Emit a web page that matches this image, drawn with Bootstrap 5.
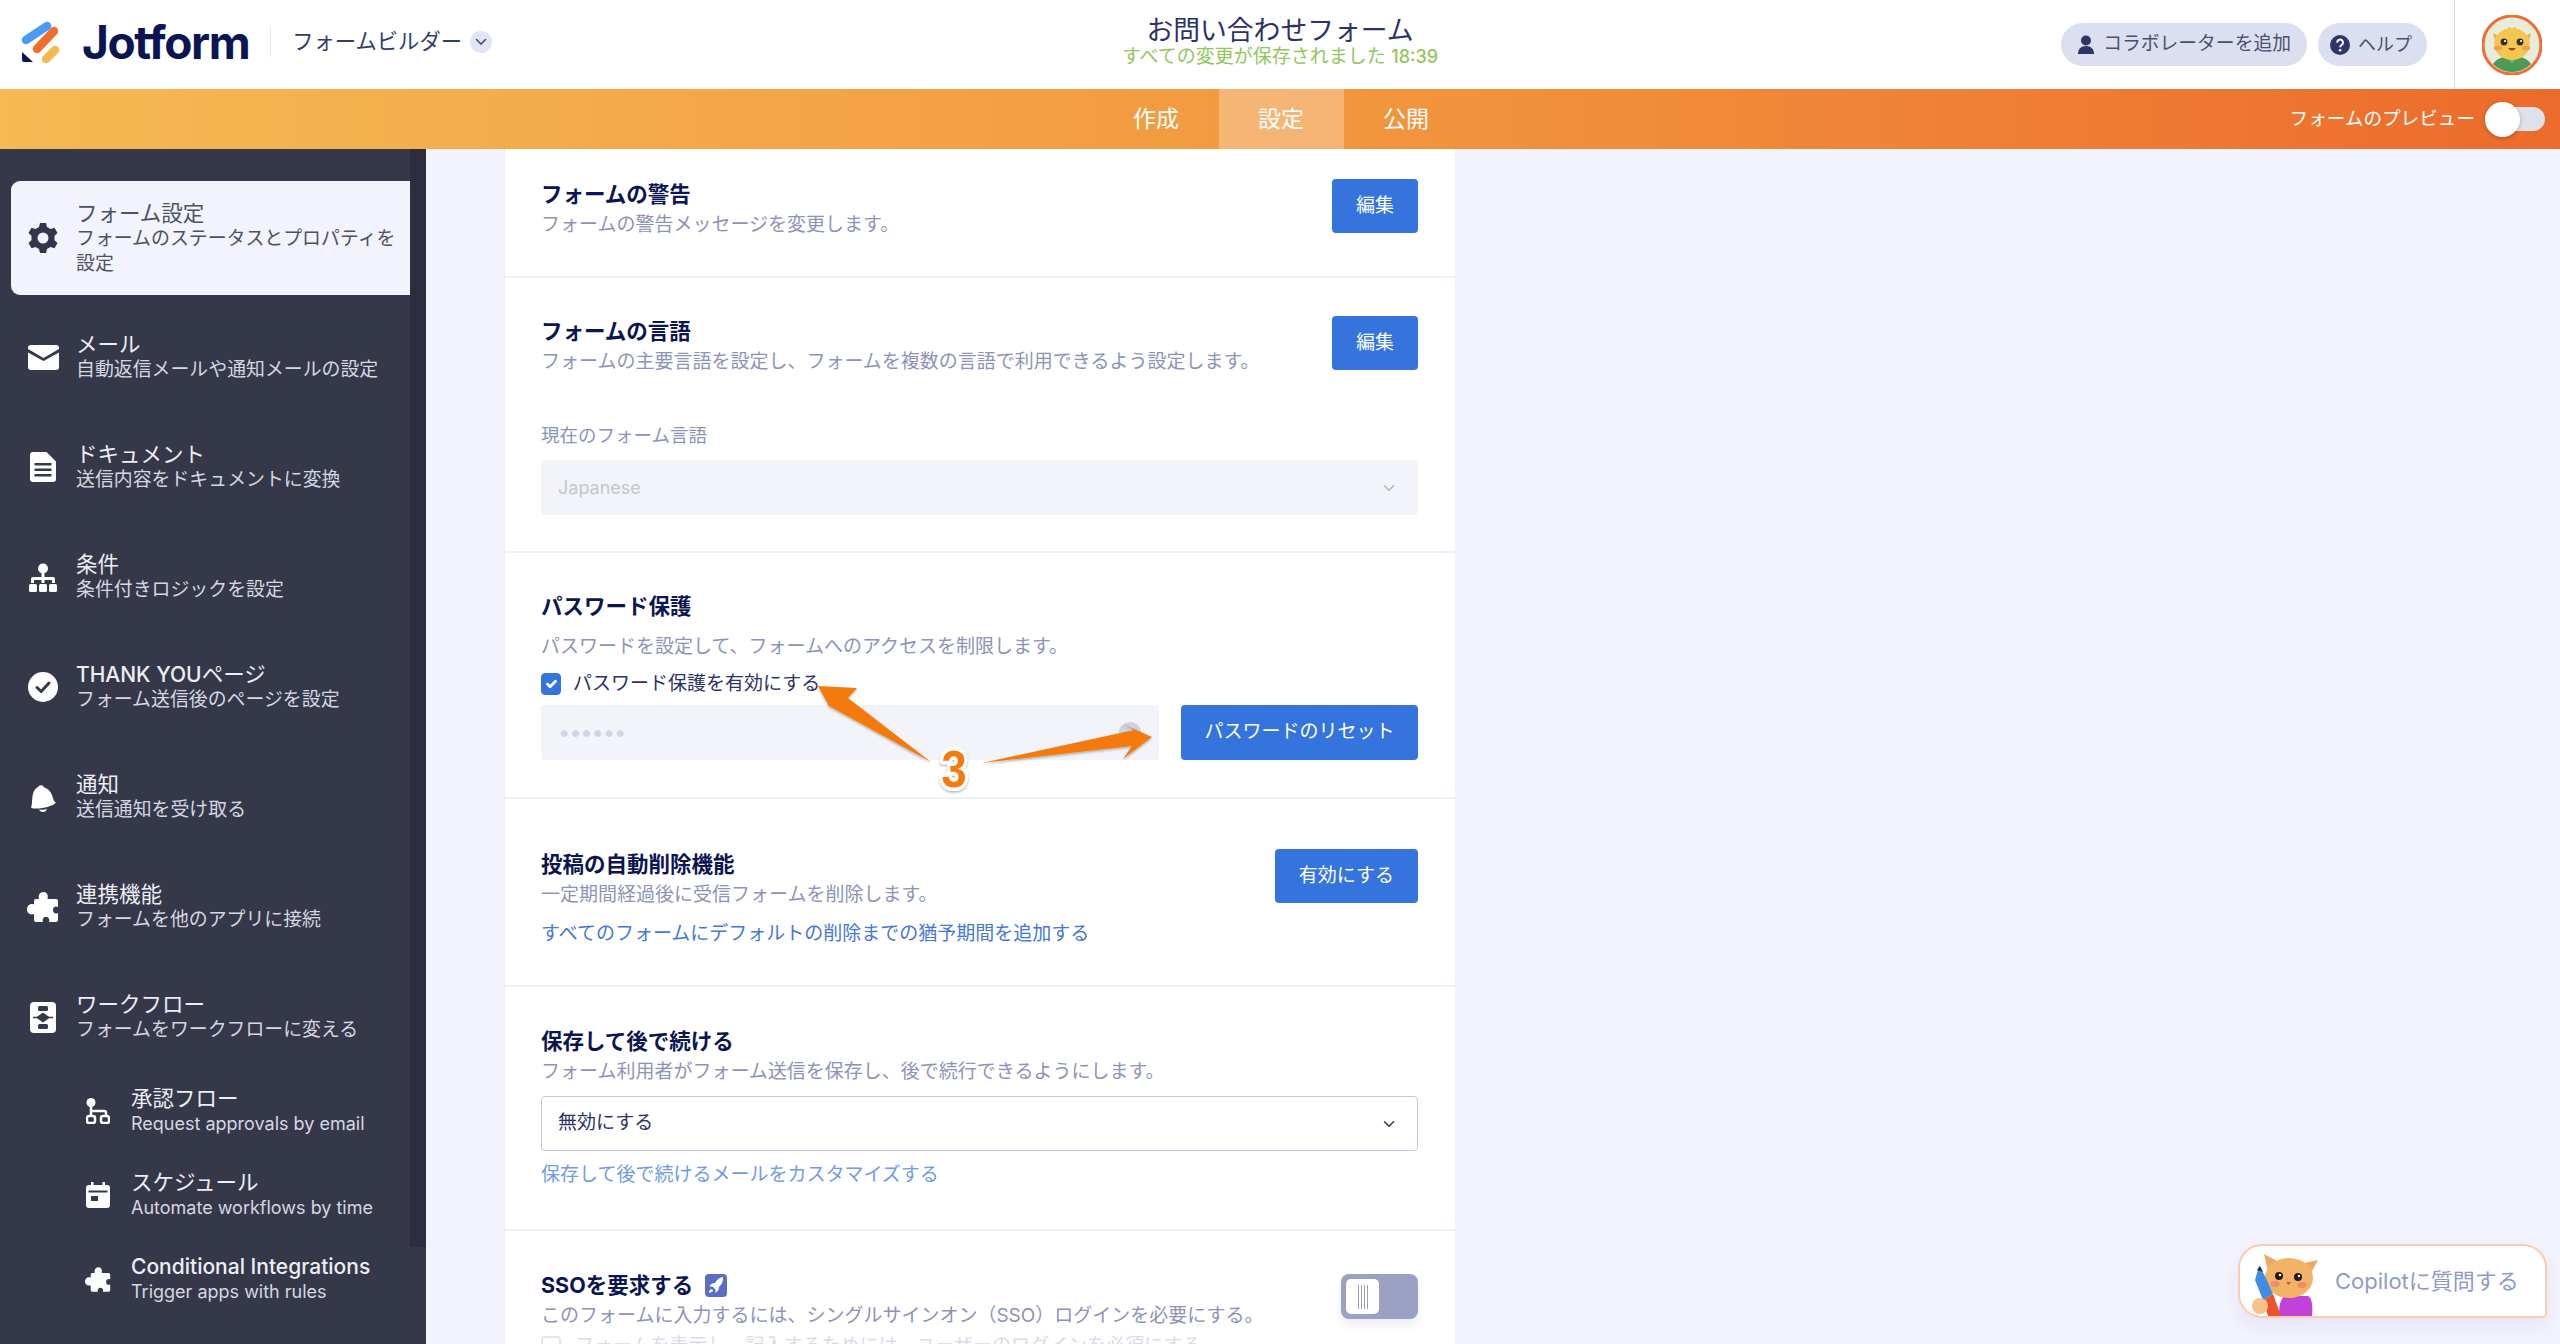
<!DOCTYPE html>
<html lang="ja">
<head>
  <meta charset="UTF-8" />
  <meta name="viewport" content="width=device-width, initial-scale=1.0"/>
  <title>お問い合わせフォーム</title>
  <link href="https://cdn.jsdelivr.net/npm/bootstrap@5.3.0/dist/css/bootstrap.min.css" rel="stylesheet" />
  <style>
    html, body { height: 100%; }
    body {
      background-color: #f3f3fe;
      font-family: "Inter", "Noto Sans CJK JP", sans-serif;
      color: #0a1551;
      overflow: hidden;
      position: relative;
    }

    /* cabecera */
    .top-head { height: 89px; display: grid; grid-template-columns: 1fr auto 1fr; background: #fff; }
    .head-left { padding-left: 19px; padding-bottom: 5px; }
    .jf-word { font-family: "Inter", sans-serif; font-weight: 700; font-size: 46px; letter-spacing: -1.4px; color: #0a1551; line-height: 1; margin-left: 19px; }
    .head-sep { width: 1px; height: 30px; background: #e6e7f2; margin: 0 21px; }
    .builder { font-size: 21.3px; color: #343c6a; }
    .chev-dot { width: 22px; height: 22px; border-radius: 50%; background: #e3e5f5; margin-left: 8px; }
    .form-name { font-size: 26.8px; line-height: 32px; color: #2a3266; margin-top: 14px; }
    .save-state { font-size: 19px; line-height: 22px; color: #93c65d; white-space: nowrap; }
    .save-state b { font-weight: 500; font-size: 18px; }
    .pill-jf { height: 43px; border-radius: 22px; background: #dcdff0; color: #4b5071; font-size: 18.8px; padding: 0 16px; white-space: nowrap; }
    .pill-help { margin-left: 11px; margin-right: 27px; padding: 0 15px 0 12px; font-size: 18px; }
    .head-rule { width: 1px; height: 89px; background: #d9dbe9; }
    .face { margin: 0 18px 0 27px; }

    /* barra naranja */
    .tab-strip { height: 60px; padding-left: 2px; display: grid; grid-template-columns: 1fr auto 1fr; background: linear-gradient(90deg, #f6b954 0%, #f2993f 50%, #ec6b2c 100%); }
    .tab-jf { width: 125px; height: 60px; line-height: 60px; text-align: center; color: #fff; font-size: 23px; }
    .tab-on { background: rgba(255, 255, 255, .28); }
    .prev-label { color: #fff; font-size: 18.6px; margin-right: 10px; white-space: nowrap; }
    .prev-track { width: 60px; height: 24px; border-radius: 12px; background: #dfe1ea; margin-right: 15px; }
    .prev-knob { width: 35px; height: 35px; border-radius: 50%; background: #fff; box-shadow: 0 1px 4px rgba(0, 0, 0, .25); }

    /* lateral */
    .work-area { height: 1195px; }
    .side-col { width: 426px; flex: none; background: #353849; display: flex; overflow: hidden; }
    .side-nav { width: 410px; padding: 32px 0 0 11px; flex: none; }
    .side-track { width: 16px; }
    .side-thumb { height: 1098px; background: #2c2e3d; }
    .side-item { display: flex; align-items: center; height: 110px; color: #eceef5; }
    .side-item.is-active { height: 114px; margin-bottom: 7px; background: #f3f3fe; color: #4d5163; border-radius: 9px 0 0 9px; }
    .side-item.is-sub { height: 84px; padding-left: 67px; }
    .sub-block { margin-top: -3px; }
    .side-ico { width: 44px; margin-left: 10px; margin-right: 11px; flex: none; display: flex; justify-content: center; }
    .side-item.is-sub .side-ico { width: 36px; margin-left: 2px; margin-right: 15px; }
    .side-main { font-size: 21.5px; line-height: 25px; display: block; }
    .side-sub { font-size: 18.9px; line-height: 25px; display: block; color: #d5d7e1; white-space: nowrap; }
    .is-active .side-sub { color: #4d5163; }
    .side-en { font-size: 18px; }
    .side-main-en { font-size: 21px; font-weight: 500; }

    /* tarjeta */
    .setting-card { width: 951px; margin-left: 78px; background: #fff; border-left: 1px solid #eeeefb; overflow: hidden; }
    .set-row { padding-left: 36px; padding-right: 37px; border-bottom: 2px solid #f0f0fb; }
    .set-warn { height: 129px; padding-top: 30px; }
    .set-lang { height: 275px; padding-top: 38px; }
    .set-pass { height: 246px; padding-top: 38px; }
    .set-auto { height: 188px; padding-top: 50px; }
    .set-save { height: 244px; padding-top: 39px; }
    .set-sso { padding-top: 39px; border-bottom: 0; }
    .set-title { font-size: 21.5px; font-weight: 700; line-height: 31px; color: #0a1551; }
    .set-desc { font-size: 19px; line-height: 30px; color: #8d93b8; white-space: nowrap; }
    .desc-gap { margin-top: 10px; }
    .btn-jf { background: #3474dc; border: 0; color: #fff; font-size: 19px; height: 54px; padding: 0 24px; border-radius: 4px; white-space: nowrap; }
    .btn-jf:hover { background: #2b66c6; color: #fff; }
    .field-label { font-size: 18.5px; line-height: 26px; color: #8d93b8; margin-top: 45px; margin-bottom: 12px; }
    .sel-jf { height: 55px; border-radius: 4px; font-size: 19px; padding-left: 16px; background-position: right 20px center; }
    .sel-off, .sel-off:disabled {
      background-color: #f3f4f9; border-color: #f3f4f9; color: #c3c6d6; opacity: 1; font-size: 18px;
      background-image: url("data:image/svg+xml,%3csvg xmlns='http://www.w3.org/2000/svg' viewBox='0 0 16 16'%3e%3cpath fill='none' stroke='%23b4b7c9' stroke-linecap='round' stroke-linejoin='round' stroke-width='2' d='m2 5 6 6 6-6'/%3e%3c/svg%3e");
    }
    .sel-live { border: 1px solid #c3c7de; color: #2a3266; margin-top: 9px; }
    .pass-check { height: 26px; margin-top: 9px; margin-bottom: 8px; font-size: 19px; color: #2a3266; }
    .pass-check .form-check-input { width: 20px; height: 22px; margin: 0 12px 0 0; border-radius: 4px; background-color: #3474dc; border-color: #3474dc; }
    .pass-field { width: 618px; height: 55px; background: #f3f4f9; border-radius: 4px; padding-left: 17px; color: #d3d4e3; font-size: 22px; letter-spacing: -1.2px; }
    .eye-dot { position: absolute; width: 22px; height: 20px; right: 18px; top: 17px; background: #cfd1e2; border-radius: 50%; }
    .btn-reset { width: 237px; height: 55px; padding: 0; }
    .link-jf { color: #4277d9; font-size: 19px; line-height: 30px; text-decoration: none; display: block; white-space: nowrap; margin-top: 9px; }
    .link-soft { color: #6f9be4; }
    .rocket-tag { width: 22px; height: 23px; background: #5a6fc4; border-radius: 4px; margin-left: 12px; }
    .sso-switch { width: 77px; height: 45px; margin-top: 4px; background: #9ba0c4; border-radius: 8px; padding: 5px; box-shadow: 0 6px 10px rgba(10, 21, 81, .08); }
    .sso-knob { width: 33px; height: 35px; background: #fff; border-radius: 5px; gap: 2px; }
    .sso-knob i { width: 1px; height: 24px; background: #9ba0c4; }
    .ghost-row { color: #d9dbe9; font-size: 19px; line-height: 26px; margin-top: 2px; white-space: nowrap; }
    .ghost-box { width: 20px; height: 20px; border: 2px solid #e4e5f0; border-radius: 4px; margin-right: 14px; }

    /* encima */
    .copilot-btn {
      position: absolute; left: 2238px; top: 1244px; width: 309px; height: 74px;
      background: #fff; border: 2px solid #f8cdb0; border-radius: 24px 24px 5px 24px;
      box-shadow: 0 8px 18px rgba(60, 60, 140, .08);
      color: #8f9bc4; font-size: 22px; white-space: nowrap;
    }
    .copilot-btn span { margin-left: 95px; }
    .copilot-cat { position: absolute; left: 11px; top: 8px; }
    .mark-layer { position: absolute; left: 0; top: 0; pointer-events: none; }
    .mark-num { font-family: "Liberation Sans", sans-serif; font-weight: 700; font-size: 52px; fill: #f57a10; stroke: #fff; stroke-width: 7px; paint-order: stroke; stroke-linejoin: round; }
  </style>
</head>
<body>

<header class="top-head">
  <div class="head-left d-flex align-items-center">
    <svg width="44" height="46" viewBox="21 15 40 46">
      <path d="M26 36 47 22" stroke="#4a9bf5" stroke-width="8.5" stroke-linecap="round"/>
      <path d="M37 45 54 27" stroke="#ee6f2e" stroke-width="8.500" stroke-linecap="round"/>
      <path d="M46 55 55 46" stroke="#f5bb52" stroke-width="8.500" stroke-linecap="round"/>
      <path d="M22 48 33 58H24a2 2 0 0 1-2-2Z" fill="#0a1551"/>
    </svg>
    <span class="jf-word">Jotform</span>
    <span class="head-sep"></span>
    <span class="builder">フォームビルダー</span>
    <span class="chev-dot d-flex align-items-center justify-content-center">
      <svg width="12" height="8" viewBox="0 0 12 8"><path d="M1.5 1.5 6 6l4.5-4.5" fill="none" stroke="#4b5071" stroke-width="1.6" stroke-linecap="round"/></svg>
    </span>
  </div>
  <div class="text-center">
    <div class="form-name">お問い合わせフォーム</div>
    <div class="save-state">すべての変更が保存されました <b>18:39</b></div>
  </div>
  <div class="d-flex align-items-center justify-content-end">
    <div class="pill-jf d-flex align-items-center gap-2">
      <svg width="18" height="20" viewBox="0 0 18 20"><circle cx="9" cy="5.5" r="5" fill="#2f3566"/><path d="M1 19c0-5 3-8 8-8s8 3 8 8Z" fill="#2f3566"/></svg>
      コラボレーターを追加
    </div>
    <div class="pill-jf pill-help d-flex align-items-center gap-2">
      <svg width="20" height="20" viewBox="0 0 20 20"><circle cx="10" cy="10" r="10" fill="#2f3566"/><path d="M7.2 7.6a2.9 2.9 0 1 1 4.4 2.4c-1 .7-1.5 1.1-1.5 2.2" fill="none" stroke="#fff" stroke-width="2"/><circle cx="10.1" cy="15.2" r="1.3" fill="#fff"/></svg>
      ヘルプ
    </div>
    <div class="head-rule"></div>
    <svg class="face" width="60" height="60" viewBox="0 0 60 60">
      <defs><clipPath id="faceClip"><circle cx="30" cy="30" r="27"/></clipPath></defs>
      <circle cx="30" cy="30" r="29" fill="#e8ebdd" stroke="#ee6f2e" stroke-width="3"/>
      <g clip-path="url(#faceClip)">
        <path d="M8 60c0-14 10-19 22-19s22 5 22 19Z" fill="#4c9a58"/>
        <path d="M25 42l5 6 5-6Z" fill="#7cc080"/>
        <path d="M11 18l8 5-5 7ZM49 18l-8 5 5 7ZM27 11l3 5 3-5 1 6h-8Z" fill="#eeb24a"/>
        <ellipse cx="30" cy="29" rx="18" ry="16" fill="#f4c64f"/>
        <circle cx="22" cy="27" r="3.4" fill="#33303a"/><circle cx="38" cy="27" r="3.4" fill="#33303a"/>
        <circle cx="23" cy="26" r="1.1" fill="#fff"/><circle cx="39" cy="26" r="1.1" fill="#fff"/>
        <ellipse cx="16" cy="33" rx="4" ry="2.6" fill="#f0a34f"/><ellipse cx="44" cy="33" rx="4" ry="2.6" fill="#f0a34f"/>
        <path d="M26 33q4 5 8 0Z" fill="#a83b2f"/>
      </g>
    </svg>
  </div>
</header>

<nav class="tab-strip">
  <div></div>
  <div class="d-flex">
    <div class="tab-jf">作成</div>
    <div class="tab-jf tab-on">設定</div>
    <div class="tab-jf">公開</div>
  </div>
  <div class="d-flex align-items-center justify-content-end">
    <span class="prev-label">フォームのプレビュー</span>
    <div class="prev-track d-flex align-items-center"><div class="prev-knob flex-shrink-0"></div></div>
  </div>
</nav>

<div class="work-area d-flex">
  <aside class="side-col">
    <div class="side-nav">
      <div class="side-item is-active">
        <span class="side-ico">
          <svg width="30" height="32" viewBox="0 0 30 32"><path fill="#33364a" fill-rule="evenodd" d="M12 1h6l1 4 3.500 2 4-1.200 3 5.200-3 2.800v4.400l3 2.800-3 5.200-4-1.200-3.500 2-1 4h-6l-1-4-3.500-2-4 1.200-3-5.200 3-2.800v-4.400l-3-2.800 3-5.200 4 1.200 3.500-2ZM15 10.500a5.500 5.500 0 1 0 0 11 5.500 5.500 0 0 0 0-11Z"/></svg>
        </span>
        <div><span class="side-main">フォーム設定</span><span class="side-sub">フォームのステータスとプロパティを<br>設定</span></div>
      </div>

      <div class="side-item">
        <span class="side-ico">
          <svg width="31" height="25" viewBox="0 0 31 25"><path fill="#fff" d="M3 0h25a3 3 0 0 1 3 3v1L15.500 13 0 4V3a3 3 0 0 1 3-3Z"/><path fill="#fff" d="M0 7.500 15.500 16 31 7.500V22a3 3 0 0 1-3 3H3a3 3 0 0 1-3-3Z"/></svg>
        </span>
        <div><span class="side-main">メール</span><span class="side-sub">自動返信メールや通知メールの設定</span></div>
      </div>

      <div class="side-item">
        <span class="side-ico">
          <svg width="26" height="30" viewBox="0 0 26 30"><path fill="#fff" fill-rule="evenodd" d="M3 0h13.500L26 9.500V27a3 3 0 0 1-3 3H3a3 3 0 0 1-3-3V3a3 3 0 0 1 3-3ZM4.500 11v2.600h17V11Zm0 5.500v2.600h17v-2.600Zm0 5.500v2.600h17V22Z"/></svg>
        </span>
        <div><span class="side-main">ドキュメント</span><span class="side-sub">送信内容をドキュメントに変換</span></div>
      </div>

      <div class="side-item">
        <span class="side-ico">
          <svg width="28" height="29" viewBox="0 0 28 29"><circle cx="14" cy="5.500" r="5" fill="#fff"/><path fill="#fff" d="M12.500 9h3v5H24a2 2 0 0 1 2 2v4h-3v-3H15.500v3h-3v-3H5v3H2v-4a2 2 0 0 1 2-2h8.500Z"/><rect y="21" width="8" height="8" rx="1.500" fill="#fff"/><rect x="10" y="21" width="8" height="8" rx="1.500" fill="#fff"/><rect x="20" y="21" width="8" height="8" rx="1.500" fill="#fff"/></svg>
        </span>
        <div><span class="side-main">条件</span><span class="side-sub">条件付きロジックを設定</span></div>
      </div>

      <div class="side-item">
        <span class="side-ico">
          <svg width="30" height="30" viewBox="0 0 30 30"><circle cx="15" cy="15" r="15" fill="#fff"/><path d="m9 15.500 4.200 4L21 11" fill="none" stroke="#353849" stroke-width="3" stroke-linecap="round" stroke-linejoin="round"/></svg>
        </span>
        <div><span class="side-main"><span class="side-main-en">THANK YOU</span>ページ</span><span class="side-sub">フォーム送信後のページを設定</span></div>
      </div>

      <div class="side-item">
        <span class="side-ico">
          <svg width="26" height="30" viewBox="0 0 26 30"><path fill="#fff" d="M5 26.500c-2 0-3.500-.5-4-1 2-4 0-13 4-18 1-1.300 2-2 3-2.500a3.300 3.300 0 0 1 6 .2c6 2 8 7 9 11 .5 2 1.500 3.500 3 4.500-3 3-12 6-21 5.800Z"/><path fill="#fff" d="M9 27.500c2 .5 6 .5 8-.8-.5 2-2 3.300-4 3.300s-3.500-1-4-2.500Z"/></svg>
        </span>
        <div><span class="side-main">通知</span><span class="side-sub">送信通知を受け取る</span></div>
      </div>

      <div class="side-item">
        <span class="side-ico">
          <svg width="32" height="30" viewBox="0 0 32 30"><path fill="#fff" d="M12 7c-1-4 1-7 4.500-7S21.500 3 20.500 7H29a2 2 0 0 1 2 2v6c-3-1.500-5 .5-5 3s2 4.500 5 3v7a2 2 0 0 1-2 2h-7c1-3-.5-5-3-5s-4 2-3 5H9a2 2 0 0 1-2-2v-6c-4 1.500-7-1-7-4.500S3 11 7 12.500V9a2 2 0 0 1 2-2Z"/></svg>
        </span>
        <div><span class="side-main">連携機能</span><span class="side-sub">フォームを他のアプリに接続</span></div>
      </div>

      <div class="side-item">
        <span class="side-ico">
          <svg width="26" height="31" viewBox="0 0 26 31"><rect width="26" height="31" rx="4" fill="#fff"/><rect x="8" y="4" width="10" height="5" rx="1.500" fill="#353849"/><path d="M13 10.500 20 15.500l-7 5-7-5Z" fill="#353849"/><rect x="8" y="22" width="10" height="5" rx="1.500" fill="#353849"/><path d="M3 15.500h20" stroke="#353849" stroke-width="1.500"/></svg>
        </span>
        <div><span class="side-main">ワークフロー</span><span class="side-sub">フォームをワークフローに変える</span></div>
      </div>

      <div class="sub-block">
        <div class="side-item is-sub">
          <span class="side-ico">
            <svg width="24" height="26" viewBox="0 0 24 26"><circle cx="5" cy="4.500" r="4.500" fill="#fff"/><path d="M5 8v10M5 13h13a2 2 0 0 1 2 2v3" fill="none" stroke="#fff" stroke-width="2.500"/><rect x="1" y="18" width="8" height="7" rx="2" fill="none" stroke="#fff" stroke-width="2.500"/><rect x="15" y="18" width="8" height="7" rx="2" fill="none" stroke="#fff" stroke-width="2.500"/></svg>
          </span>
          <div><span class="side-main">承認フロー</span><span class="side-sub side-en">Request approvals by email</span></div>
        </div>
        <div class="side-item is-sub">
          <span class="side-ico">
            <svg width="24" height="26" viewBox="0 0 24 26"><path fill="#fff" fill-rule="evenodd" d="M5 0h2.500v3h9V0H19v3h2a3 3 0 0 1 3 3v17a3 3 0 0 1-3 3H3a3 3 0 0 1-3-3V6a3 3 0 0 1 3-3h2ZM2.500 8.500v2h19v-2ZM5 14v5h7v-5Z"/></svg>
          </span>
          <div><span class="side-main">スケジュール</span><span class="side-sub side-en">Automate workflows by time</span></div>
        </div>
        <div class="side-item is-sub">
          <span class="side-ico">
            <svg width="26" height="25" viewBox="0 0 32 30"><path fill="#fff" d="M12 7c-1-4 1-7 4.500-7S21.500 3 20.500 7H29a2 2 0 0 1 2 2v6c-3-1.500-5 .5-5 3s2 4.500 5 3v7a2 2 0 0 1-2 2h-7c1-3-.5-5-3-5s-4 2-3 5H9a2 2 0 0 1-2-2v-6c-4 1.500-7-1-7-4.500S3 11 7 12.500V9a2 2 0 0 1 2-2Z"/></svg>
          </span>
          <div><span class="side-main side-main-en">Conditional Integrations</span><span class="side-sub side-en">Trigger apps with rules</span></div>
        </div>
      </div>
    </div>
    <div class="side-track"><div class="side-thumb"></div></div>
  </aside>

  <main class="setting-card">
    <section class="set-row set-warn d-flex justify-content-between align-items-start">
      <div>
        <div class="set-title">フォームの警告</div>
        <div class="set-desc">フォームの警告メッセージを変更します。</div>
      </div>
      <button type="button" class="btn btn-jf">編集</button>
    </section>

    <section class="set-row set-lang">
      <div class="d-flex justify-content-between align-items-start">
        <div>
          <div class="set-title">フォームの言語</div>
          <div class="set-desc">フォームの主要言語を設定し、フォームを複数の言語で利用できるよう設定します。</div>
        </div>
        <button type="button" class="btn btn-jf">編集</button>
      </div>
      <div class="field-label">現在のフォーム言語</div>
      <select class="form-select sel-jf sel-off" disabled><option>Japanese</option></select>
    </section>

    <section class="set-row set-pass">
      <div class="set-title">パスワード保護</div>
      <div class="set-desc desc-gap">パスワードを設定して、フォームへのアクセスを制限します。</div>
      <div class="pass-check d-flex align-items-center">
        <input class="form-check-input" type="checkbox" checked>
        <span>パスワード保護を有効にする</span>
      </div>
      <div class="d-flex justify-content-between">
        <div class="pass-field d-flex align-items-center position-relative">••••••<span class="eye-dot"></span></div>
        <button type="button" class="btn btn-jf btn-reset">パスワードのリセット</button>
      </div>
    </section>

    <section class="set-row set-auto d-flex justify-content-between align-items-start">
      <div>
        <div class="set-title">投稿の自動削除機能</div>
        <div class="set-desc">一定期間経過後に受信フォームを削除します。</div>
        <a href="#" class="link-jf">すべてのフォームにデフォルトの削除までの猶予期間を追加する</a>
      </div>
      <button type="button" class="btn btn-jf">有効にする</button>
    </section>

    <section class="set-row set-save">
      <div class="set-title">保存して後で続ける</div>
      <div class="set-desc">フォーム利用者がフォーム送信を保存し、後で続行できるようにします。</div>
      <select class="form-select sel-jf sel-live"><option>無効にする</option></select>
      <a href="#" class="link-jf link-soft">保存して後で続けるメールをカスタマイズする</a>
    </section>

    <section class="set-row set-sso d-flex justify-content-between align-items-start">
      <div>
        <div class="set-title d-flex align-items-center">SSOを要求する
          <span class="rocket-tag d-flex align-items-center justify-content-center">
            <svg width="16" height="17" viewBox="0 0 16 17"><path fill="#fff" d="M15 0c.5 4-1 7.500-4 10l-.5 3-3 3v-3.500L4.500 9.500H1l3-3 3-.5C9 2 12 .5 15 0ZM3 12c1 0 2 1 2 2-1 1-2.500 1.500-4 1.500C1 14 1.800 13 3 12Z"/></svg>
          </span>
        </div>
        <div class="set-desc">このフォームに入力するには、シングルサインオン（SSO）ログインを必要にする。</div>
        <div class="ghost-row d-flex align-items-center"><span class="ghost-box"></span>フォームを表示し、記入するためには、ユーザーのログインを必須にする</div>
      </div>
      <div class="sso-switch d-flex">
        <div class="sso-knob d-flex align-items-center justify-content-center"><i></i><i></i><i></i><i></i></div>
      </div>
    </section>
  </main>
</div>

<!-- anotacion encima de la captura -->
<svg class="mark-layer" width="2560" height="1344" viewBox="0 0 2560 1344">
  <defs>
    <filter id="markShadow" x="-10%" y="-10%" width="120%" height="130%"><feDropShadow dx="0" dy="1.500" stdDeviation="1.200" flood-color="#000" flood-opacity=".3"/></filter>
  </defs>
  <g filter="url(#markShadow)" fill="#f57a10">
    <path d="M818 686 857 688 848 698 931 762 829 706 836 719Z"/>
    <path d="M982 763 1134 730 1123 724 1152 737 1123 759 1132 746Z"/>
  </g>
  <text class="mark-num" filter="url(#markShadow)" transform="translate(954 787) scale(.88 1)" text-anchor="middle">3</text>
</svg>

<button type="button" class="copilot-btn d-flex align-items-center p-0">
  <svg class="copilot-cat" width="68" height="62" viewBox="0 0 68 62">
    <path d="M36 42c-4 0-8 3-8 20h33c1-10 0-18-4-20Z" fill="#c042d8"/>
    <path d="M18 21 13 0l17 9ZM60 19l7-13-18 4Z" fill="#f0a864"/>
    <ellipse cx="38" cy="24" rx="24" ry="20" fill="#f3b266"/>
    <circle cx="28" cy="22" r="4" fill="#211a18"/><circle cx="47" cy="23" r="4" fill="#211a18"/>
    <circle cx="29" cy="21" r="1.200" fill="#fff"/><circle cx="48" cy="22" r="1.200" fill="#fff"/>
    <ellipse cx="24" cy="30" rx="4.500" ry="3" fill="#f08a6c"/><ellipse cx="51" cy="31" rx="4.500" ry="3" fill="#f08a6c"/>
    <path d="M35 28h5l-2.500 3Z" fill="#c4553f"/>
    <path d="M8 12 14 22 22 40 12 46 4 26Z" fill="#3f8ee6"/>
    <path d="M6 16 9 12 12 18Z" fill="#2b2b2b"/>
    <path d="M22 40 30 62H17L12 46Z" fill="#e8552a"/>
    <circle cx="9" cy="52" r="8" fill="#f5c38b"/>
  </svg>
  <span>Copilotに質問する</span>
</button>

<script src="https://cdn.jsdelivr.net/npm/bootstrap@5.3.0/dist/js/bootstrap.bundle.min.js"></script>
</body>
</html>
